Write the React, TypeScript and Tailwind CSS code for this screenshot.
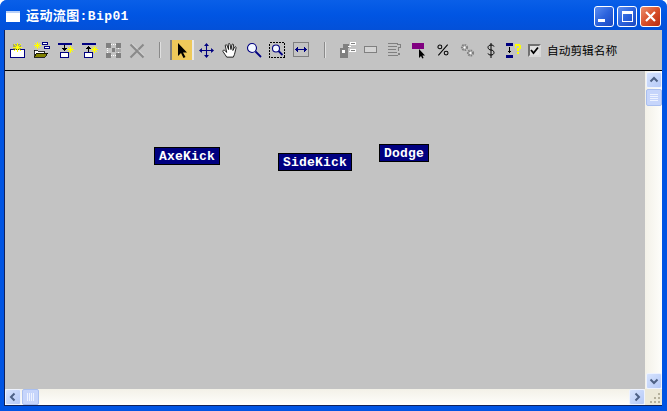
import React from "react";

const cjk = { fontFamily: '"Liberation Mono","Noto Sans CJK SC",monospace' };
const N = "#000080";
const G = "#808080";

function Svg({ children }: { children: React.ReactNode }) {
  return (
    <svg width="18" height="18" viewBox="0 0 18 18" shapeRendering="crispEdges" fill="none">
      {children}
    </svg>
  );
}

function Spark({ x, y, big }: { x: number; y: number; big?: boolean }) {
  const r = big ? 4 : 3;
  return (
    <g>
      <path
        d={`M${x - r} ${y + 0.5}h${2 * r + 1}M${x + 0.5} ${y - r}v${2 * r + 1}M${x - r + 1} ${y - r + 1}l${2 * r - 1} ${2 * r - 1}M${x + r} ${y - r + 1}l${-2 * r + 1} ${2 * r - 1}`}
        stroke="#ffff00"
        strokeWidth="1"
      />
      <rect x={x - 1} y={y - 1} width="3" height="3" fill="#ffff00" />
    </g>
  );
}

const icons: Record<string, React.ReactNode> = {
  newClip: (
    <Svg>
      <rect x="2.500" y="8.500" width="14" height="8" stroke={N} fill="#fff" />
      <rect x="3.500" y="16" width="13" height="1" fill={N} />
      <rect x="5" y="3" width="8" height="6" fill="#808000" opacity="0.45" />
      <Spark x={9} y={6} big />
    </Svg>
  ),
  open: (
    <Svg>
      <Spark x={5} y={4} />
      <path d="M10.500 1.500h5v2h-5zM12.500 5.500h5v2h-5z" fill="#fff" stroke={N} />
      <path d="M2 16V9h3l1 1h6v2H5l-3 4z" fill="#fff" stroke="#000" strokeWidth="0.8" />
      <path d="M2 16l3-4h11l-3 4z" fill="#808000" stroke="#000" strokeWidth="0.8" />
    </Svg>
  ),
  down: (
    <Svg>
      <rect x="2" y="2" width="14" height="2" fill={N} />
      <rect x="4.500" y="11.500" width="8" height="5" fill="#fff" stroke={N} />
      <path d="M8.500 4v5" stroke="#000" />
      <path d="M6 7h5l-2.500 3z" fill="#000" />
      <Spark x={14} y={8} />
    </Svg>
  ),
  up: (
    <Svg>
      <rect x="2" y="2" width="14" height="2" fill={N} />
      <rect x="4.500" y="11.500" width="8" height="5" fill="#fff" stroke={N} />
      <path d="M8.500 7v4" stroke="#000" />
      <path d="M6 8h5L8.500 5z" fill="#000" />
      <Spark x={14} y={8} />
    </Svg>
  ),
  grid: (
    <Svg>
      <path d="M2 2h5v5H2zM12 2h5v5h-5zM2 12h5v5H2zM12 12h5v5h-5z" fill={G} />
      <path d="M8 7h3v4H8z" fill={G} />
      <path d="M7 3.500h5M7 14.500h5M3.500 7v5M14.500 7v5" stroke="#fff" strokeDasharray="1 1" />
      <path d="M12 8h5v3h-5z" fill="#a8a8a8" />
    </Svg>
  ),
  cross: (
    <svg width="18" height="18" viewBox="0 0 18 18" fill="none">
      <path d="M2.500 3.500l13 13M15.500 3.500l-13 13" stroke="#8a8a8a" strokeWidth="2" />
      <path d="M4 2.500l12 12" stroke="#e8e8e8" strokeWidth="0.500" />
    </svg>
  ),
  arrow: (
    <svg width="18" height="18" viewBox="0 0 18 18">
      <path d="M5 2v13l3-3 2.500 5 2-1-2.500-4.500h4z" fill="#000" />
    </svg>
  ),
  move: (
    <svg width="15" height="15" viewBox="0 0 18 18" fill="none">
      <path d="M9 2v14M2 9h14" stroke={N} strokeWidth="1.300" />
      <path d="M9 0l3 3.500H6zM9 18l3-3.500H6zM0 9l3.500-3v6zM18 9l-3.500-3v6z" fill={N} />
    </svg>
  ),
  hand: (
    <svg width="17" height="17" viewBox="0 0 18 18" fill="#fff" stroke="#000" strokeWidth="0.900">
      <path d="M5 16c-1-2-3-4-4-6-.5-1 1-2 2-1l2 2L3.500 4c-.3-1 1.200-1.700 1.700-.5L7 8 6.700 2.500c0-1.200 1.700-1.200 1.800 0L9.500 8l1-5c.2-1.200 1.800-1 1.700.2L11.500 9l1.800-3.500c.5-1 2-.4 1.600.7C14 9 14 12 12 16z" />
    </svg>
  ),
  zoom: (
    <svg width="18" height="18" viewBox="0 0 18 18" fill="none">
      <circle cx="7" cy="7" r="4.500" fill="#f4f8ff" stroke={N} strokeWidth="1.100" />
      <path d="M10.500 10.500l5.500 5.500" stroke={N} strokeWidth="1.800" />
    </svg>
  ),
  zoomRegion: (
    <svg width="18" height="18" viewBox="0 0 18 18" fill="none">
      <rect x="0.500" y="1.500" width="15" height="15" stroke="#000" strokeDasharray="2 1" shapeRendering="crispEdges" />
      <circle cx="7" cy="7.500" r="3.500" fill="#f4f8ff" stroke={N} strokeWidth="1.100" />
      <path d="M9.500 10l4 4" stroke={N} strokeWidth="1.800" />
    </svg>
  ),
  fit: (
    <Svg>
      <rect x="0.500" y="1.500" width="15" height="14" stroke={G} strokeWidth="1" />
      <path d="M3 8.500h10" stroke={N} />
      <path d="M2 8.500l3-3v6zM14 8.500l-3-3v6z" fill={N} />
    </Svg>
  ),
  nodes: (
    <Svg>
      <rect x="5" y="3" width="6" height="4" fill={G} />
      <rect x="2" y="7" width="8" height="10" fill={G} />
      <rect x="4" y="9" width="3" height="3" fill="#fff" />
      <rect x="12.500" y="1.500" width="5" height="2" stroke="#fff" fill={G} />
      <rect x="12.500" y="8.500" width="5" height="2" stroke="#fff" fill={G} />
      <path d="M10 5h3M11 10h2" stroke="#fff" />
    </Svg>
  ),
  dash: (
    <Svg>
      <rect x="2.500" y="5.500" width="12" height="6" stroke={G} fill="#d4d4d4" />
    </Svg>
  ),
  listq: (
    <Svg>
      <path d="M2 2.500h10M2 5.500h9M2 8.500h8M2 11.500h9M2 14.500h10" stroke={G} />
      <path d="M11 3h4v4h-2v3h-1V6h2V4h-3z" fill={G} />
      <rect x="12" y="12" width="2" height="2" fill={G} />
    </Svg>
  ),
  flag: (
    <svg width="18" height="18" viewBox="0 0 18 18">
      <rect x="2" y="2" width="12" height="6" fill="#800080" />
      <path d="M9 8v9l2-2 1.300 2.500 1.300-.6-1.200-2.400H15z" fill="#000" />
    </svg>
  ),
  percent: (
    <svg width="14" height="14" viewBox="0 0 18 18" fill="none" stroke="#000" strokeWidth="1.300">
      <circle cx="5" cy="5" r="2.500" />
      <circle cx="13" cy="13" r="2.500" />
      <path d="M15 2L3 16" />
    </svg>
  ),
  gears: (
    <svg width="18" height="18" viewBox="0 0 18 18" fill="none">
      <circle cx="6.500" cy="6.500" r="2.500" stroke={G} strokeWidth="2.200" strokeDasharray="1.500 0.800" />
      <circle cx="12.500" cy="12" r="2.500" stroke={G} strokeWidth="2.200" strokeDasharray="1.500 0.800" />
      <circle cx="6.500" cy="6.500" r="1" fill="#fff" />
      <circle cx="12.500" cy="12" r="1" fill="#fff" />
    </svg>
  ),
  dollar: (
    <svg width="18" height="18" viewBox="0 0 18 18" fill="none" stroke="#000" strokeWidth="1">
      <path d="M12 5.500C11.700 4.500 10.500 4 9 4S6 4.800 6 6.500 8 9 9 9s3 .7 3 2.500S10.500 14 9 14s-2.700-.5-3-1.500M9 2v15" />
    </svg>
  ),
  ibeam: (
    <Svg>
      <rect x="0" y="2" width="7" height="3" fill={N} />
      <rect x="0" y="14" width="7" height="3" fill={N} />
      <path d="M3.500 6v6" stroke="#000" />
      <path d="M1 9.500h5l-2.500 3z" fill="#000" />
      <path d="M9 3h5v1h1v4h-2v2h-2V7h2V5h-3v2H9z" fill="#ffff00" />
      <rect x="11" y="11" width="2" height="2" fill="#ffff00" />
    </Svg>
  ),
};

function Tool({ name, active }: { name: string; active?: boolean }) {
  return (
    <div
      className={
        active
          ? "w-[24px] h-[20px] flex items-center justify-center bg-[#eec95a] border-l-2 border-r-2 border-l-[#808080] border-r-[#e8e8e8]"
          : "w-[24px] h-[20px] flex items-center justify-center"
      }
    >
      {icons[name]}
    </div>
  );
}

function CaptionButton({ close, children }: { close?: boolean; children: React.ReactNode }) {
  return (
    <div
      className={
        close
          ? "w-[21px] h-[21px] rounded-[3px] border border-white flex items-center justify-center bg-gradient-to-br from-[#e98d6b] via-[#d9502a] to-[#b8290f]"
          : "w-[20px] h-[21px] rounded-[3px] border border-white flex items-center justify-center bg-gradient-to-br from-[#5c8df0] via-[#2c63dd] to-[#1c48c0]"
      }
    >
      {children}
    </div>
  );
}

function ScrollBtn({ d }: { d: string }) {
  return (
    <div className="w-[16px] h-[16px] rounded-[2px] border border-[#eef3ff] bg-gradient-to-br from-[#d6e3fd] to-[#b5c9f7] flex items-center justify-center">
      <svg width="10" height="10" viewBox="0 0 10 10" fill="none">
        <path d={d} stroke="#4d6185" strokeWidth="2" />
      </svg>
    </div>
  );
}

function Thumb({ vertical }: { vertical?: boolean }) {
  return (
    <div
      className={
        vertical
          ? "w-[16px] h-[17px] mt-[1px] rounded-[2px] border border-[#a9bff0] bg-[#c6d5fb] flex flex-col items-center justify-center gap-[1px]"
          : "w-[17px] h-[16px] ml-[1px] rounded-[2px] border border-[#a9bff0] bg-[#c6d5fb] flex items-center justify-center gap-[1px]"
      }
    >
      {[0, 1, 2, 3].map((i) => (
        <div key={i} className={vertical ? "w-[8px] h-[1px] bg-[#eef3ff]" : "w-[1px] h-[8px] bg-[#eef3ff]"} />
      ))}
    </div>
  );
}

function Node({ label, className }: { label: string; className: string }) {
  return (
    <div
      className={`absolute h-[18px] bg-[#000080] border border-black text-white text-[13px] font-bold leading-[16px] pt-[1px] tracking-[0.2px] text-center ${className}`}
      style={cjk}
    >
      {label}
    </div>
  );
}

export default function App() {
  return (
    <div className="w-[667px] h-[411px] flex flex-col bg-[#0054e3] rounded-t-[7px] overflow-hidden">
      {/* title bar */}
      <div className="h-[30px] shrink-0 flex items-center pl-[6px] pr-[6px] pt-[3px] bg-gradient-to-b from-[#0a5fe8] via-[#0055e3] to-[#0350d8]">
        <div className="w-[14px] h-[11px] bg-white border-t-2 border-t-[#b8d0f8] mr-[6px]" />
        <span className="text-white text-[13px] font-bold tracking-[0.4px] leading-none" style={cjk}>
          运动流图:Bip01
        </span>
        <div className="ml-auto flex gap-[3px]">
          <CaptionButton>
            <div className="w-[7px] h-[3px] bg-white mt-[8px] mr-[5px]" />
          </CaptionButton>
          <CaptionButton>
            <div className="w-[11px] h-[11px] border border-white border-t-[3px]" />
          </CaptionButton>
          <CaptionButton close>
            <svg width="13" height="13" viewBox="0 0 13 13" fill="none">
              <path d="M2 2l9 9M11 2l-9 9" stroke="#fff" strokeWidth="2.200" />
            </svg>
          </CaptionButton>
        </div>
      </div>

      {/* client */}
      <div className="flex-1 flex flex-col ml-[4px] mr-[5px] mb-[5px] bg-[#c3c3c3] min-h-0 border-b border-b-[#10215a] border-l border-l-[#10215a]">
        {/* toolbar */}
        <div className="h-[41px] shrink-0 flex items-center border-b border-b-black">
          <Tool name="newClip" />
          <Tool name="open" />
          <Tool name="down" />
          <Tool name="up" />
          <Tool name="grid" />
          <Tool name="cross" />
          <div className="w-[2px] h-[16px] ml-[10px] mr-[9px] bg-[#8a8a8a] border-r border-r-[#e0e0e0]" />
          <Tool name="arrow" active />
          <Tool name="move" />
          <Tool name="hand" />
          <Tool name="zoom" />
          <Tool name="zoomRegion" />
          <Tool name="fit" />
          <div className="w-[2px] h-[16px] ml-[10px] mr-[9px] bg-[#8a8a8a] border-r border-r-[#e0e0e0]" />
          <Tool name="nodes" />
          <Tool name="dash" />
          <Tool name="listq" />
          <Tool name="flag" />
          <Tool name="percent" />
          <Tool name="gears" />
          <Tool name="dollar" />
          <Tool name="ibeam" />
          <div className="ml-[1px] w-[13px] h-[13px] bg-[#e0e0e0] border-2 border-t-[#707070] border-l-[#707070] border-r-[#d8d8d8] border-b-[#d8d8d8] flex items-center justify-center">
            <svg width="9" height="9" viewBox="0 0 9 9" fill="none">
              <path d="M1 4l2.500 3L8 1.500" stroke="#000" strokeWidth="1.800" />
            </svg>
          </div>
          <span className="ml-[6px] text-[11.700px] text-black leading-none whitespace-nowrap" style={{ fontFamily: '"Noto Sans CJK SC",sans-serif' }}>
            自动剪辑名称
          </span>
        </div>

        {/* canvas + scrollbars */}
        <div className="flex-1 flex min-h-0">
          <div className="flex-1 flex flex-col min-w-0">
            <div className="flex-1 relative bg-[#c3c3c3]">
              <Node label="AxeKick" className="left-[149px] top-[76px] w-[66px]" />
              <Node label="SideKick" className="left-[273px] top-[82px] w-[74px]" />
              <Node label="Dodge" className="left-[374px] top-[73px] w-[50px]" />
            </div>
            <div className="h-[16px] shrink-0 flex bg-gradient-to-b from-[#f3f1e8] to-[#fefefb]">
              <ScrollBtn d="M6.500 1.500L3 5l3.500 3.500" />
              <Thumb />
              <div className="flex-1" />
              <ScrollBtn d="M3.500 1.500L7 5 3.500 8.500" />
            </div>
          </div>
          <div className="w-[17px] shrink-0 flex flex-col bg-gradient-to-r from-[#f3f1e8] to-[#fefefb]">
            <div className="flex-1 flex flex-col items-center pt-[1px]">
              <ScrollBtn d="M1.500 6.500L5 3l3.500 3.500" />
              <Thumb vertical />
              <div className="flex-1" />
              <ScrollBtn d="M1.500 3.500L5 7l3.500-3.500" />
            </div>
            <div className="h-[16px] shrink-0 bg-[#ece9d8] flex items-end justify-end p-[2px]">
              <svg width="10" height="10" viewBox="0 0 10 10" shapeRendering="crispEdges" fill="#b5b19c">
                <path d="M8 0h2v2H8zM4 4h2v2H4zM8 4h2v2H8zM0 8h2v2H0zM4 8h2v2H4zM8 8h2v2H8z" />
              </svg>
            </div>
          </div>
        </div>
      </div>
    </div>
  );
}
